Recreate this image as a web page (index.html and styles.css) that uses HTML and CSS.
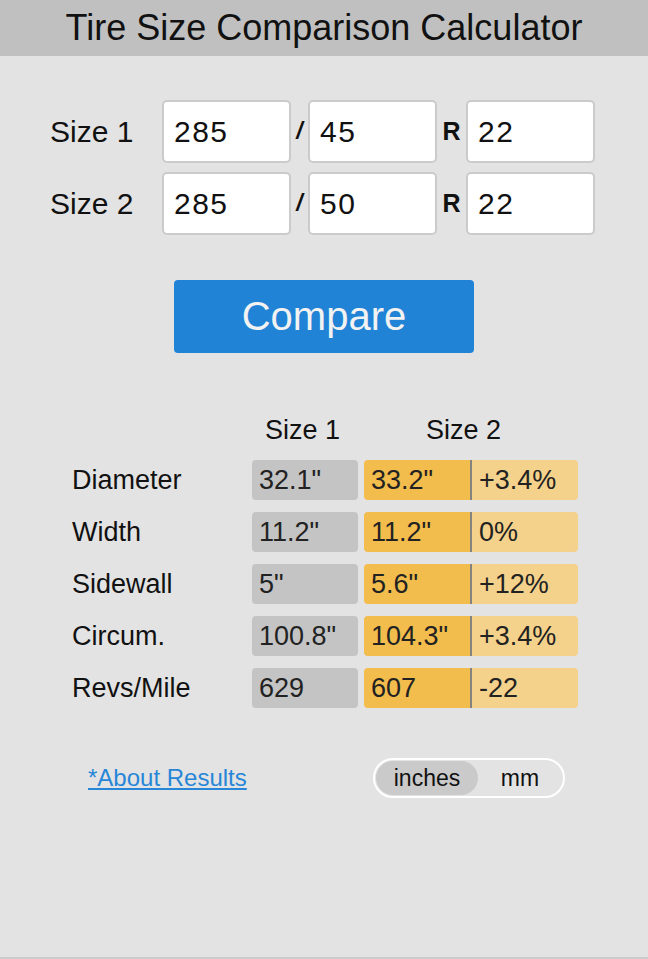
FILE: index.html
```html
<!DOCTYPE html>
<html lang="en">
<head>
    <meta charset="UTF-8">
    <meta name="viewport" content="width=device-width, initial-scale=1.0">
    <title>Tire Size Comparison Calculator</title>
    <link rel="stylesheet" href="styles.css">
</head>
<body>
    <header class="top-bar">
        <h1>Tire Size Comparison Calculator</h1>
    </header>
    <main class="calc">
        <form class="size-form">
            <div class="size-row">
                <label for="w1">Size 1</label>
                <input type="text" id="w1" value="285">
                <span class="sep slash">/</span>
                <input type="text" id="a1" value="45">
                <span class="sep rim">R</span>
                <input type="text" id="r1" value="22">
            </div>
            <div class="size-row">
                <label for="w2">Size 2</label>
                <input type="text" id="w2" value="285">
                <span class="sep slash">/</span>
                <input type="text" id="a2" value="50">
                <span class="sep rim">R</span>
                <input type="text" id="r2" value="22">
            </div>
            <button type="submit" class="compare-btn">Compare</button>
        </form>

        <div class="results">
            <div class="results-head">
                <span class="col-name"></span>
                <span class="head-1">Size 1</span>
                <span class="head-2">Size 2</span>
            </div>
            <div class="results-row">
                <span class="col-name">Diameter</span>
                <span class="cell cell-1">32.1"</span>
                <span class="cell cell-2">33.2"</span>
                <span class="cell cell-diff">+3.4%</span>
            </div>
            <div class="results-row">
                <span class="col-name">Width</span>
                <span class="cell cell-1">11.2"</span>
                <span class="cell cell-2">11.2"</span>
                <span class="cell cell-diff">0%</span>
            </div>
            <div class="results-row">
                <span class="col-name">Sidewall</span>
                <span class="cell cell-1">5"</span>
                <span class="cell cell-2">5.6"</span>
                <span class="cell cell-diff">+12%</span>
            </div>
            <div class="results-row">
                <span class="col-name">Circum.</span>
                <span class="cell cell-1">100.8"</span>
                <span class="cell cell-2">104.3"</span>
                <span class="cell cell-diff">+3.4%</span>
            </div>
            <div class="results-row">
                <span class="col-name">Revs/Mile</span>
                <span class="cell cell-1">629</span>
                <span class="cell cell-2">607</span>
                <span class="cell cell-diff">-22</span>
            </div>
        </div>

        <div class="results-foot">
            <a href="#about" class="about-link">*About Results</a>
            <div class="unit-toggle">
                <span class="unit active">inches</span>
                <span class="unit">mm</span>
            </div>
        </div>
    </main>
</body>
</html>
```

FILE: styles.css
```css
body {
    font-family: "Liberation Sans", Arial, sans-serif;
    margin: 0;
    min-height: 100vh;
    box-sizing: border-box;
    background-color: #e3e3e3;
    border-bottom: 2px solid #cbcbcb;
    color: #111;
}
.top-bar {
    height: 56px;
    background-color: #c0c0c0;
    display: flex;
    align-items: center;
    justify-content: center;
}
.top-bar h1 {
    margin: 0;
    font-size: 36px;
    font-weight: normal;
    color: #111;
}
.size-form {
    margin-top: 44px;
    display: flex;
    flex-direction: column;
}
.size-row {
    display: flex;
    align-items: center;
    padding-left: 50px;
    margin-bottom: 9px;
}
.size-row label {
    width: 112px;
    font-size: 30px;
}
.size-row input {
    width: 129px;
    height: 63px;
    box-sizing: border-box;
    margin: 0;
    padding: 0 10px;
    border: 2px solid #cbcbcb;
    border-radius: 5px;
    background-color: #fff;
    font-family: "Liberation Sans", Arial, sans-serif;
    font-size: 30px;
    letter-spacing: 1.5px;
    color: #111;
}
.sep {
    text-align: center;
    font-weight: bold;
    color: #111;
}
.slash {
    width: 17px;
    font-size: 23px;
    font-style: italic;
}
.rim {
    width: 29px;
    font-size: 25px;
}
.compare-btn {
    align-self: center;
    width: 300px;
    height: 73px;
    margin-top: 36px;
    background-color: #2183d6;
    color: #f2f2f2;
    border: none;
    border-radius: 4px;
    font-family: "Liberation Sans", Arial, sans-serif;
    font-size: 40px;
    cursor: pointer;
}
.results {
    margin-top: 62px;
    padding-left: 72px;
    font-size: 27px;
}
.results-head,
.results-row {
    display: flex;
}
.results-head {
    line-height: 31px;
    margin-bottom: 14px;
}
.results-row {
    height: 40px;
    line-height: 40px;
    margin-bottom: 12px;
}
.col-name {
    width: 180px;
}
.head-1 {
    width: 106px;
    padding-right: 5px;
    text-align: center;
}
.head-2 {
    width: 214px;
    margin-left: 6px;
    padding-right: 15px;
    text-align: center;
}
.head-1,
.head-2 {
    box-sizing: border-box;
}
.cell {
    height: 40px;
    box-sizing: border-box;
    padding-left: 7px;
    color: #222;
}
.cell-1 {
    width: 106px;
    margin-right: 6px;
    background-color: #c4c4c4;
    border-radius: 4px;
}
.cell-2 {
    width: 108px;
    background-color: #f3bd4d;
    border-right: 2px solid #85837d;
    border-radius: 4px 0 0 4px;
}
.cell-diff {
    width: 106px;
    background-color: #f5d28b;
    border-radius: 0 4px 4px 0;
}
.results-foot {
    display: flex;
    align-items: center;
    margin-top: 50px;
    padding-left: 88px;
}
.about-link {
    font-size: 24px;
    color: #2886d8;
    width: 285px;
}
.unit-toggle {
    display: flex;
    height: 40px;
    box-sizing: border-box;
    padding: 1px;
    border: 2px solid #fff;
    border-radius: 20px;
}
.unit {
    display: flex;
    align-items: center;
    justify-content: center;
    font-size: 23px;
    color: #111;
    border-radius: 18px;
}
.unit.active {
    width: 102px;
    background-color: #cacaca;
}
.unit + .unit {
    width: 84px;
}
```
